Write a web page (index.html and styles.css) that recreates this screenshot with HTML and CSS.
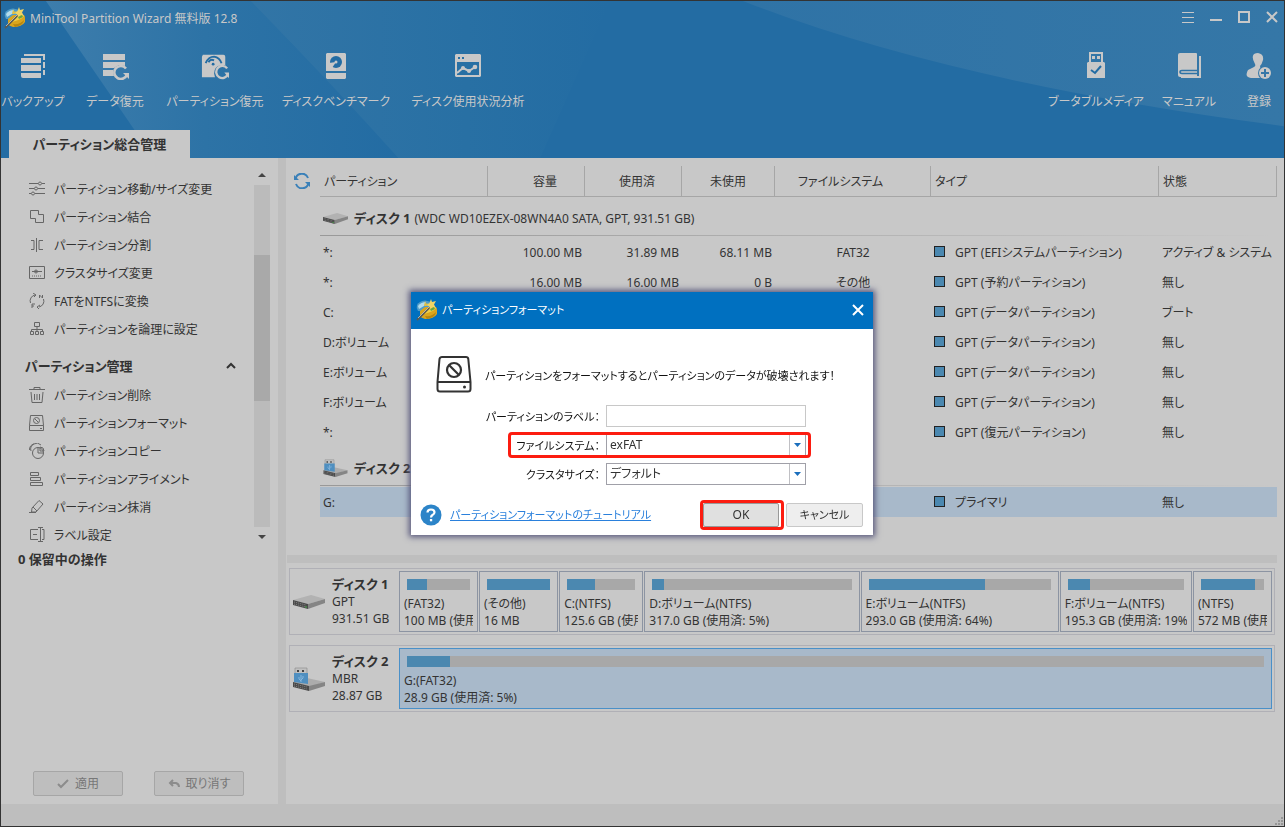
FILE: index.html
```html
<!DOCTYPE html>
<html lang="ja">
<head>
<meta charset="utf-8">
<title>MiniTool Partition Wizard 無料版 12.8</title>
<link rel="stylesheet" href="styles.css">
</head>
<body>
<svg class="defs" width="0" height="0" aria-hidden="true">
  <symbol id="logo" viewBox="0 0 22 22">
    <path d="M1 6Q3 2 9 1.500L16 3L18 8L8 12L2 12Q0 9 1 6Z" fill="#4f9cc9"/>
    <path d="M2 7Q5 3 10 3L8 7L3 10Z" fill="#b4dceb"/>
    <path d="M4 12L9 8H19Q21 8 21 11V15Q18 20 9 20Q5 19 4 17Z" fill="#dba51c"/>
    <path d="M9 12Q14 8 20 9Q19 12 8 15Z" fill="#f0cf48"/>
    <path d="M9 17Q16 18 20 13Q20 18 11 20Z" fill="#b8860f"/>
    <path d="M1 21L15 7" stroke="#5c5a50" stroke-width="1.800"/>
    <path d="M2 19L14 7" stroke="#d9d9ca" stroke-width=".7"/>
    <path d="M15 0L16 3L20 2L18 5.500L20 9L16.500 8.500L14 11L13.500 7.500L10 6L13.500 4Z" fill="#efd465"/>
    <path d="M9 2L10 4.500L12 4.500L10.500 7L8 7L8.500 5Z" fill="#e4c040"/>
    <path d="M14 10L18 8L19 10L15 12Z" fill="#68a640"/>
  </symbol>
  <symbol id="hdd" viewBox="0 0 32 14">
    <path d="M0 5L18 0L32 4L15 9Z" fill="#b2b2b2"/>
    <path d="M0 5L15 9V14L0 10Z" fill="#4a4a4a"/>
    <path d="M15 9L32 4V8L15 14Z" fill="#858585"/>
    <path d="M1 7L13 10M1 9L13 12" stroke="#858585" stroke-width="1" stroke-dasharray="1 1"/>
    <path d="M12 12h2" stroke="#48a848"/>
  </symbol>
  <symbol id="usbdisk" viewBox="0 0 32 24">
    <path d="M0 15L14 11L32 15L16 20Z" fill="#acacac"/>
    <path d="M0 15L16 19V24L0 20Z" fill="#4a4a4a"/>
    <path d="M16 19L32 15V19L16 24Z" fill="#858585"/>
    <path d="M1 17L14 20M1 19L14 22" stroke="#858585" stroke-dasharray="1 1"/>
    <path d="M2 1H14V7H2Z" fill="#c0c0c0" stroke="#888" stroke-width=".6"/>
    <path d="M4 3h2v2h-2zM9 3h2v2h-2z" fill="#444"/>
    <path d="M1 6H15V17L1 15Z" fill="#4f8fc0"/>
    <path d="M8 8v7M6 10v2l2 2M10 9v2l-2 2" fill="none" stroke="#86b6dc"/>
  </symbol>
  <symbol id="format" viewBox="0 0 36 38">
    <path d="M6 2H30Q32 2 32.300 4L34.500 27V34Q34.500 36.500 32 36.500H4Q1.500 36.500 1.500 34V27L3.500 4Q4 2 6 2ZM1.500 27H34.500" fill="none" stroke="#333" stroke-width="2"/>
    <circle cx="18" cy="15" r="7" fill="none" stroke="#333" stroke-width="2.200"/>
    <path d="M13 10L23 20" stroke="#333" stroke-width="2.200"/>
    <circle cx="28.500" cy="32" r="1.500" fill="#333"/>
  </symbol>
</svg>

<div class="app">
  <header class="header">
    <svg class="header-art" viewBox="0 0 1285 158" preserveAspectRatio="none" aria-hidden="true">
      <defs>
        <linearGradient id="g1"><stop offset="0" stop-color="#3d7dac"/><stop offset=".45" stop-color="#2d73a6"/><stop offset="1" stop-color="#236ca3"/></linearGradient>
        <linearGradient id="g2"><stop offset="0" stop-color="#3275a6"/><stop offset=".6" stop-color="#2870a4"/><stop offset="1" stop-color="#236ca3"/></linearGradient>
        <linearGradient id="g3"><stop offset="0" stop-color="#2f73a6"/><stop offset="1" stop-color="#3577a7"/></linearGradient>
      </defs>
      <path d="M45 0L153 158H398Q330 82 250 0Z" fill="url(#g1)"/>
      <path d="M250 0Q330 82 398 158H540L610 0Z" fill="url(#g2)"/>
      <path d="M743 0Q950 82 1285 126V0Z" fill="url(#g3)"/>
    </svg>
    <div class="titlebar">
      <svg class="logo"><use href="#logo"/></svg>
      <h1 class="app-title">MiniTool Partition Wizard 無料版 12.8</h1>
      <div class="window-buttons">
        <button type="button" aria-label="メニュー"><svg width="14" height="14"><path d="M1 1.500h12M1 6.500h12M1 11.500h12" stroke="#c8c8c8"/></svg></button>
        <button type="button" aria-label="最小化"><svg width="14" height="14"><path d="M1 9h12" stroke="#c8c8c8" stroke-width="2"/></svg></button>
        <button type="button" aria-label="最大化"><svg width="14" height="14"><path d="M2 1h10v10H2z" fill="none" stroke="#c8c8c8" stroke-width="2"/></svg></button>
        <button type="button" aria-label="閉じる"><svg width="14" height="14"><path d="M2 1L12 11M12 1L2 11" stroke="#c8c8c8" stroke-width="2"/></svg></button>
      </div>
    </div>
    <nav class="toolbar">
      <button type="button" class="tool tool-backup"><svg viewBox="0 0 28 28"><path d="M2 6h20v5H2zM2 13h20v6H2zM2 21h20v5H4q-2 0-2-2z" fill="#c8c8c8"/><path d="M5 3h20v22" fill="none" stroke="#c8c8c8" stroke-width="2" stroke-dasharray="25 2 6 2 5 2"/></svg><span>バックアップ</span></button>
      <button type="button" class="tool tool-data"><svg viewBox="0 0 28 28"><path d="M2 2h22v6H2zM2 10h22v4l-6-1-5 3H2zM2 18h10l1 6H2z" fill="#c8c8c8"/><path d="M25 16.500A6.500 6.500 0 1 0 26 22.500" fill="none" stroke="#c8c8c8" stroke-width="2.500"/><path d="M22 21h6v6z" fill="#c8c8c8"/></svg><span>データ復元</span></button>
      <button type="button" class="tool tool-partition"><svg viewBox="0 0 30 28"><path d="M2 2h22q2 0 2 2v9h-5q-7 2-7 9l1 4H1V4z" fill="#c8c8c8"/><path d="M5 11Q8 4 14 4Q20 5 22 11" fill="none" stroke="#236ca3" stroke-width="2"/><path d="M8 10Q10 6 14 8" fill="none" stroke="#236ca3" stroke-width="2"/><circle cx="13" cy="12" r="1.500" fill="#236ca3"/><path d="M28 16.500A6.500 6.500 0 1 0 29 22.500" fill="none" stroke="#c8c8c8" stroke-width="2.500"/><path d="M25 21h5v6z" fill="#c8c8c8"/></svg><span>パーティション復元</span></button>
      <button type="button" class="tool tool-bench"><svg viewBox="0 0 28 28"><path d="M5 1h18l1 1v17H4V2zM4 21h20v5l-1 1H5l-1-1z" fill="#c8c8c8"/><circle cx="14" cy="10" r="6" fill="#236ca3"/><path d="M14 10L7 11V16H10Z" fill="#c8c8c8"/><circle cx="14" cy="10" r="1.500" fill="#c8c8c8"/></svg><span>ディスクベンチマーク</span></button>
      <button type="button" class="tool tool-usage"><svg viewBox="0 0 28 28"><path fill-rule="evenodd" d="M2 2h24l1 1v21l-1 1H2l-1-1V3zM3 10v13h22V10zM4 5v2h2V5zM8 5v2h2V5z" fill="#c8c8c8"/><path d="M3 21L9 16L15 19L21 15" fill="none" stroke="#c8c8c8" stroke-width="2"/><circle cx="9" cy="16" r="2" fill="#c8c8c8"/><circle cx="15" cy="19" r="2" fill="#c8c8c8"/><circle cx="21" cy="15" r="2.300" fill="#c8c8c8"/></svg><span>ディスク使用状況分析</span></button>
      <span class="spacer"></span>
      <button type="button" class="tool tool-media"><svg viewBox="0 0 28 28"><path fill-rule="evenodd" d="M7 0h14v10h1l1 1v15H5V11l1-1h1zM9 2v8h10V2z" fill="#c8c8c8"/><path d="M10 4h3v3h-3zM15 4h3v3h-3z" fill="#c8c8c8"/><path d="M9 18L13 21L19 14" fill="none" stroke="#236ca3" stroke-width="2"/></svg><span>ブータブルメディア</span></button>
      <button type="button" class="tool tool-manual"><svg viewBox="0 0 28 28"><path d="M5 1h16q1 0 1 1v23H5q-2 0-2-2V3q0-2 2-2z" fill="#c8c8c8"/><path d="M22 18.500H7q-2 0-2 1.500t2 1.500h15" fill="none" stroke="#2f73a6" stroke-width="1.500"/><path d="M25 4v21H6" fill="none" stroke="#c8c8c8" stroke-width="2"/></svg><span>マニュアル</span></button>
      <button type="button" class="tool tool-register"><svg viewBox="0 0 28 28"><path d="M13 1Q19 2 18 8Q17 12 15 14Q16 17 14 21L15 26H6Q-1 25 3 18L9 15Q11 14 10 12Q6 5 9 2Q11 1 13 1Z" fill="#c8c8c8"/><circle cx="20" cy="21" r="7" fill="#3577a7"/><circle cx="20" cy="21" r="6" fill="#c8c8c8"/><path d="M16 21h8M20 17v8" stroke="#3577a7" stroke-width="2"/></svg><span>登録</span></button>
    </nav>
    <div class="tabs"><button type="button" class="tab">パーティション総合管理</button></div>
  </header>

  <div class="body">
    <aside class="sidebar">
      <div class="actions">
        <div class="actions-list">
          <ul>
            <li><button type="button"><svg viewBox="0 0 16 16"><path d="M0 2.500h9M13 2.500h3M0 7.500h5M9 7.500h7M0 12.500h2M6 12.500h10"/><circle cx="11" cy="2.500" r="1.500"/><circle cx="7" cy="7.500" r="1.500"/><circle cx="4" cy="12.500" r="1.500"/></svg>パーティション移動/サイズ変更</button></li>
            <li><button type="button"><svg viewBox="0 0 16 16"><path d="M1.500 1.500h8v4h5v8h-8v-4h-5z"/></svg>パーティション結合</button></li>
            <li><button type="button"><svg viewBox="0 0 16 16"><path d="M7.500 1v14M2 3.500h3v9H2M14 3.500h-4v9h4"/></svg>パーティション分割</button></li>
            <li><button type="button"><svg viewBox="0 0 16 16"><path d="M.5 1.500h15v12H.5zM3 6.500h10"/><circle cx="7" cy="6.500" r="1.500"/><path d="M3 11h10" stroke-dasharray="1 1"/></svg>クラスタサイズ変更</button></li>
            <li><button type="button"><svg viewBox="0 0 16 16"><path d="M1.500 10A6 6 0 0 1 6 2M4 0l3 2-2 2M14.500 6A6 6 0 0 1 10 14M11 12l-3 2 2 2M3 15v-4h3M3 13h2M10.500 5V2l3 3V2"/></svg>FATをNTFSに変換</button></li>
            <li><button type="button"><svg viewBox="0 0 16 16"><path d="M5.500 1.500h5v4h-5zM8 5.500v5M2.500 10.500v-2h11v2M1.500 10.500h3v3h-3zM6.500 10.500h3v3h-3zM11.500 10.500h3v3h-3z"/></svg>パーティションを論理に設定</button></li>
          </ul>
          <h2 class="group">パーティション管理<svg width="10" height="8"><path d="M1 6L5 2L9 6" fill="none" stroke="#333" stroke-width="2"/></svg></h2>
          <ul>
            <li><button type="button"><svg viewBox="0 0 16 16"><path d="M0 2.500h16M5 2V.5h6V2M2 5l1 10.500h10L14 5M5.500 7v6M8 7v6M10.500 7v6"/></svg>パーティション削除</button></li>
            <li><button type="button"><svg viewBox="0 0 16 16"><path d="M1.500 .5h12l1 10v5H.5v-5zM.5 10.500h14M11 13.500h2"/><circle cx="7.500" cy="5.500" r="3"/><path d="M6 4l3 3"/></svg>パーティションフォーマット</button></li>
            <li><button type="button"><svg viewBox="0 0 16 16"><path d="M2 8A6 6 0 0 1 12 2"/><path d="M0.500 7A6 6 0 0 1 5 1"/><circle cx="9" cy="10" r="5.500"/><path d="M9 4.500V10h5.500M11 8V4q4 0 4 4z"/></svg>パーティションコピー</button></li>
            <li><button type="button"><svg viewBox="0 0 16 16"><path d="M1.500 1.500h8v3h-8zM1.500 6.500h10v3h-10zM1.500 11.500h12v3h-12z"/></svg>パーティションアライメント</button></li>
            <li><button type="button"><svg viewBox="0 0 16 16"><path d="M10 1.500L14 5L7 13H2.500L3 9zM4 8l4 4M0 13.500h7"/></svg>パーティション抹消</button></li>
            <li><button type="button"><svg viewBox="0 0 16 16"><path d="M9 2.500H1.500v10H9M4 7.500h4M9 .5h5M9 14.500h5M11.500.5v14M13 2.500h2v10h-2"/></svg>ラベル設定</button></li>
          </ul>
        </div>
        <div class="scrollbar" aria-hidden="true">
          <svg width="8" height="4"><path d="M0 4L4 0L8 4z" fill="#444"/></svg>
          <div class="track"><div class="thumb"></div></div>
          <svg width="8" height="4"><path d="M0 0L4 4L8 0z" fill="#444"/></svg>
        </div>
      </div>
      <p class="pending">0 保留中の操作</p>
      <div class="side-buttons">
        <button type="button" disabled><svg width="12" height="10"><path d="M1 5L4 8L11 1" fill="none" stroke="#8c8c8c" stroke-width="2"/></svg>適用</button>
        <button type="button" disabled><svg width="12" height="10"><path d="M5 1L2 4L5 7M2 4H8Q11 5 11 8" fill="none" stroke="#8c8c8c" stroke-width="2"/></svg>取り消す</button>
      </div>
    </aside>

    <main class="main">
      <section class="list">
        <button type="button" class="refresh" aria-label="更新"><svg width="16" height="16"><path d="M1.500 6A6.500 6.500 0 0 1 14 5M14.500 10A6.500 6.500 0 0 1 2 11" fill="none" stroke="#3a80b8" stroke-width="2"/><path d="M0 2V7H5zM16 14V9H11z" fill="#3a80b8"/></svg></button>
        <table class="partitions">
          <colgroup><col class="c-name"><col class="c-cap"><col class="c-used"><col class="c-free"><col class="c-fs"><col class="c-type"><col class="c-state"></colgroup>
          <thead><tr><th class="left">パーティション</th><th class="h-cap">容量</th><th class="h-used">使用済</th><th>未使用</th><th class="h-fs">ファイルシステム</th><th class="left">タイプ</th><th class="left">状態</th></tr></thead>
          <tbody>
            <tr class="disk-row"><td colspan="7"><div><svg width="25" height="11"><use href="#hdd"/></svg><b>ディスク 1</b> (WDC WD10EZEX-08WN4A0 SATA, GPT, 931.51 GB)</div></td></tr>
            <tr><td>*:</td><td>100.00 MB</td><td>31.89 MB</td><td>68.11 MB</td><td>FAT32</td><td><i></i>GPT (EFIシステムパーティション)</td><td>アクティブ &amp; システム</td></tr>
            <tr><td>*:</td><td>16.00 MB</td><td>16.00 MB</td><td>0 B</td><td>その他</td><td><i></i>GPT (予約パーティション)</td><td>無し</td></tr>
            <tr><td>C:</td><td></td><td></td><td></td><td></td><td><i></i>GPT (データパーティション)</td><td>ブート</td></tr>
            <tr><td>D:ボリューム</td><td></td><td></td><td></td><td></td><td><i></i>GPT (データパーティション)</td><td>無し</td></tr>
            <tr><td>E:ボリューム</td><td></td><td></td><td></td><td></td><td><i></i>GPT (データパーティション)</td><td>無し</td></tr>
            <tr><td>F:ボリューム</td><td></td><td></td><td></td><td></td><td><i></i>GPT (データパーティション)</td><td>無し</td></tr>
            <tr><td>*:</td><td></td><td></td><td></td><td></td><td><i></i>GPT (復元パーティション)</td><td>無し</td></tr>
            <tr class="disk-row"><td colspan="7"><div><svg width="25" height="18"><use href="#usbdisk"/></svg><b>ディスク 2</b></div></td></tr>
            <tr class="selected"><td>G:</td><td></td><td></td><td></td><td></td><td><i></i>プライマリ</td><td>無し</td></tr>
          </tbody>
        </table>
      </section>
      <div class="splitter"></div>
      <section class="maps">
        <article class="map">
          <svg class="map-icon" width="32" height="14"><use href="#hdd"/></svg>
          <div class="map-name"><b>ディスク 1</b><span>GPT</span><span>931.51 GB</span></div>
          <div class="blocks blocks-gpt">
            <div class="block"><div class="bar"><div style="width:32%"></div></div><p>(FAT32)</p><p>100 MB (使用</p></div>
            <div class="block"><div class="bar"><div style="width:100%"></div></div><p>(その他)</p><p>16 MB</p></div>
            <div class="block"><div class="bar"><div style="width:41%"></div></div><p>C:(NTFS)</p><p>125.6 GB (使用</p></div>
            <div class="block"><div class="bar"><div style="width:6%"></div></div><p>D:ボリューム(NTFS)</p><p>317.0 GB (使用済: 5%)</p></div>
            <div class="block"><div class="bar"><div style="width:64%"></div></div><p>E:ボリューム(NTFS)</p><p>293.0 GB (使用済: 64%)</p></div>
            <div class="block"><div class="bar"><div style="width:19%"></div></div><p>F:ボリューム(NTFS)</p><p>195.3 GB (使用済: 19%</p></div>
            <div class="block"><div class="bar"><div style="width:86%"></div></div><p>(NTFS)</p><p>572 MB (使用</p></div>
          </div>
        </article>
        <article class="map">
          <svg class="map-icon" width="32" height="24"><use href="#usbdisk"/></svg>
          <div class="map-name"><b>ディスク 2</b><span>MBR</span><span>28.87 GB</span></div>
          <div class="blocks">
            <div class="block active"><div class="bar"><div style="width:5%"></div></div><p>G:(FAT32)</p><p>28.9 GB (使用済: 5%)</p></div>
          </div>
        </article>
      </section>
    </main>
  </div>
  <footer class="status"><svg width="9" height="9"><path d="M6 0h2v2h-2zM6 3h2v2h-2zM3 3h2v2h-2zM6 6h2v2h-2zM3 6h2v2h-2zM0 6h2v2h-2z" fill="#969696"/></svg></footer>
</div>

<div class="overlay">
  <form class="dialog" role="dialog" aria-labelledby="dialog-title">
    <div class="dialog-bar">
      <svg class="logo"><use href="#logo"/></svg>
      <h2 id="dialog-title">パーティションフォーマット</h2>
      <button type="button" aria-label="閉じる"><svg width="12" height="12"><path d="M1 1L11 11M11 1L1 11" stroke="#fff" stroke-width="2"/></svg></button>
    </div>
    <div class="dialog-body">
      <div class="message"><svg width="36" height="38"><use href="#format"/></svg><p>パーティションをフォーマットするとパーティションのデータが破壊されます！</p></div>
      <div class="field"><label for="vol">パーティションのラベル：</label><input id="vol" type="text"></div>
      <div class="field marked"><label for="fs">ファイルシステム：</label><span class="combo"><select id="fs"><option>exFAT</option></select><svg width="16" height="20"><path d="M.5 0v20" stroke="#c0c0c4"/><path d="M5 8h7L8.500 12z" fill="#1b6fbd"/></svg></span></div>
      <div class="field"><label for="cluster">クラスタサイズ：</label><span class="combo"><select id="cluster"><option>デフォルト</option></select><svg width="16" height="20"><path d="M.5 0v20" stroke="#c0c0c4"/><path d="M5 8h7L8.500 12z" fill="#1b6fbd"/></svg></span></div>
      <div class="dialog-foot">
        <svg width="22" height="22"><circle cx="11" cy="11" r="10.500" fill="#2c84c8"/><path d="M7.500 8.500Q7.500 5.500 11 5.500Q14.500 5.500 14.500 8.300Q14.500 10 12.500 11Q11 12 11 13.500" fill="none" stroke="#fff" stroke-width="2.200"/><path d="M9.900 15h2.300v2.300H9.900z" fill="#fff"/></svg>
        <a href="#">パーティションフォーマットのチュートリアル</a>
        <span class="marked-ok"><button type="button" class="ok">OK</button></span>
        <button type="button" class="cancel">キャンセル</button>
      </div>
    </div>
  </form>
</div>
</body>
</html>
```
FILE: styles.css
```css
* { box-sizing: border-box; }
body, h1, h2, p, ul { margin: 0; padding: 0; }
body, button, input, select {
  font-family: "Noto Sans", "Noto Sans CJK JP", sans-serif;
  font-size: 12px;
  line-height: 17px;
  font-feature-settings: "palt";
  color: #333;
}
body { background: #c8c8c8; }
button { border: 0; padding: 0; background: none; white-space: nowrap; }
ul { list-style: none; }
svg { flex: none; }
.defs { position: absolute; }

.app { display: flex; flex-direction: column; min-height: 100vh; border: 1px solid #333; }

/* header */
.header { position: relative; display: flex; flex-direction: column; background: #236ca3; }
.header-art { position: absolute; inset: 0; width: 100%; height: 100%; }
.titlebar, .toolbar, .tabs { position: relative; display: flex; }
.titlebar { align-items: center; height: 34px; padding: 0 5px 0 3px; }
.logo { width: 22px; height: 22px; }
.app-title { flex: 1; margin-left: 4px; font-size: 12px; font-weight: 400; color: #c8c8c8; }
.window-buttons { display: flex; gap: 14px; }
.window-buttons button { width: 14px; height: 14px; }
.window-buttons svg { display: block; }
.toolbar { gap: 24px; height: 95px; padding: 17px 11px 0 3px; }
.tool { display: flex; flex-direction: column; align-items: center; height: 60px; gap: 13px; color: #c8c8c8; }
.tool svg { width: 28px; height: 28px; }
.tool-backup, .tool-data { width: 58px; }
.tool-partition { width: 94px; }
.tool-bench { width: 100px; }
.tool-usage { width: 116px; }
.tool-media { width: 88px; }
.tool-manual { width: 50px; }
.tool-register { width: 28px; margin-left: 7px; }
.spacer { flex: 1; }
.tab { height: 28px; width: 181px; margin-left: 8px; background: #c8c8c8; font-size: 13px; font-weight: 700; }

/* sidebar */
.body { display: flex; flex: 1; }
.sidebar { display: flex; flex-direction: column; width: 285px; border-right: 8px solid #bebebe; }
.actions { display: flex; justify-content: space-between; padding: 13px 8px 0 0; }
.actions-list { flex: 1; padding: 4px 18px 0 24px; }
.actions li button { display: flex; align-items: center; gap: 9px; height: 28px; padding-left: 4px; }
.actions li svg { width: 16px; height: 16px; fill: none; stroke: #666; }
.group { display: flex; align-items: center; justify-content: space-between; height: 38px; padding-top: 8px; font-size: 13px; }
.scrollbar { display: flex; flex-direction: column; align-items: center; gap: 8px; width: 16px; padding: 2px 0 10px; }
.track { flex: 1; width: 16px; padding-top: 70px; background: #bbb; }
.thumb { height: 146px; background: #a9a9a9; }
.pending { padding-left: 17px; font-size: 13px; font-weight: 700; line-height: 20px; }
.side-buttons { display: flex; gap: 31px; margin-top: auto; padding: 0 0 8px 32px; }
.side-buttons button { display: flex; align-items: center; justify-content: center; gap: 6px; width: 90px; height: 25px; border: 1px solid #a6a6a6; border-radius: 2px; background: #bebebe; color: #777; }

/* partition list */
.main { flex: 1; min-width: 0; padding-right: 7px; }
.list { display: flex; gap: 10px; min-height: 397px; padding: 8px 0 38px 8px; }
.refresh { width: 16px; height: 30px; }
.refresh svg { display: block; }
.partitions { flex: 1; align-self: flex-start; border-spacing: 0; table-layout: fixed; }
.c-name { width: 168px; } .c-cap, .c-used { width: 97px; } .c-free { width: 93px; }
.c-fs { width: 156px; } .c-type { width: 228px; }
th { height: 31px; padding: 0; border: solid #a6a6a6; border-width: 0 1px 1px 0; font-weight: 400; }
th.left { padding-left: 4px; text-align: left; }
.h-cap { padding-left: 18px; }
.h-used { padding-left: 8px; }
.h-fs { padding-right: 24px; }
td { height: 30px; padding: 1px 3px 0; white-space: nowrap; }
td:nth-child(2), td:nth-child(3), td:nth-child(4) { text-align: right; }
td:nth-child(5) { text-align: center; }
td i { display: inline-block; width: 11px; height: 11px; margin-right: 10px; border: 1px solid #222; background: #4b88b0; }
.disk-row td { height: 40px; padding: 0; text-align: left; vertical-align: top; }
.disk-row div { display: flex; align-items: center; height: 39px; padding: 3px 0 0 3px; gap: 4px; background: linear-gradient(90deg, #999, #c8c8c8) bottom / 100% 1px no-repeat; }
.disk-row b { margin-left: 2px; font-size: 13px; }
.selected td { background: #a8b9ca; }

.splitter { height: 8px; margin-left: 1px; background: #bebebe; }

/* disk maps */
.maps { display: grid; gap: 10px; padding: 5px 2px 0 3px; }
.map { display: flex; align-items: center; height: 67px; padding: 2px; border: 1px solid #b0b0b6; }
.map-icon { margin: 0 7px 0 1px; }
.map-name { display: flex; flex-direction: column; width: 67px; }
.map-name b { font-size: 13px; }
.blocks { display: grid; flex: 1; min-width: 0; gap: 1px; }
.blocks-gpt { grid-template-columns: 79fr 79fr 84fr 215fr 198fr 132fr 79fr; }
.block { min-width: 0; height: 61px; padding: 7px 4px 0; border: 1px solid #8c94a2; }
.block p { overflow: hidden; white-space: nowrap; }
.block.active { border-color: #4a90c8; background: #a8b9ca; }
.bar { height: 11px; margin: 0 3px 5px; background: #a8a8a8; }
.bar div { height: 100%; background: #4b88b0; }

.status { display: flex; justify-content: flex-end; align-items: flex-end; height: 22px; background: #bebebe; }

/* dialog */
.overlay { position: fixed; inset: 0 1px 0 0; display: flex; align-items: center; justify-content: center; }
.dialog { width: 462px; background: #fff; box-shadow: 0 0 6px 2px #55557a; }
.dialog-bar { display: flex; align-items: center; height: 37px; padding: 0 9px 2px 5px; background: #0070c0; }
.dialog-bar h2 { flex: 1; margin-left: 4px; font-size: 11px; font-weight: 400; color: #fff; }
.dialog-bar button { width: 12px; height: 12px; }
.dialog-bar button svg { display: block; }
.dialog-body { padding: 26px 10px 7px 9px; font-size: 11px; color: #111; }
.message { display: flex; align-items: center; gap: 13px; padding-left: 16px; margin-bottom: 12px; white-space: nowrap; }
.message p { padding-top: 3px; }
.field { position: relative; display: flex; align-items: center; justify-content: flex-end; gap: 6px; height: 22px; margin: 0 57px 7px 0; }
.field label { color: #111; }
.field input, .combo { width: 200px; height: 22px; }
.field input { border: 1px solid #c8c8c8; }
.combo { display: flex; align-items: center; border: 1px solid #a0a0a8; }
.combo select { flex: 1; min-width: 0; appearance: none; border: 0; padding: 0 3px; background: #fff; height: 20px; line-height: 20px; }
.marked::after { content: ""; position: absolute; inset: -2px -5px -2px 88px; border: 3px solid #fc1c10; border-radius: 4px; }
.dialog-foot { display: flex; align-items: center; gap: 8px; margin-top: 16px; height: 27px; }
.dialog-foot a { flex: 1; color: #2a80dc; }
.marked-ok { border: 3px solid #fc1c10; border-radius: 4px; padding-right: 2px; }
.ok, .cancel { height: 24px; border: 1px solid #c8c8c8; background: #eee; border-radius: 2px; }
.ok { display: block; width: 76px; border-color: #999; background: #e0e0e0; }
.cancel { width: 77px; margin-left: -6px; font-size: 11px; }
```
